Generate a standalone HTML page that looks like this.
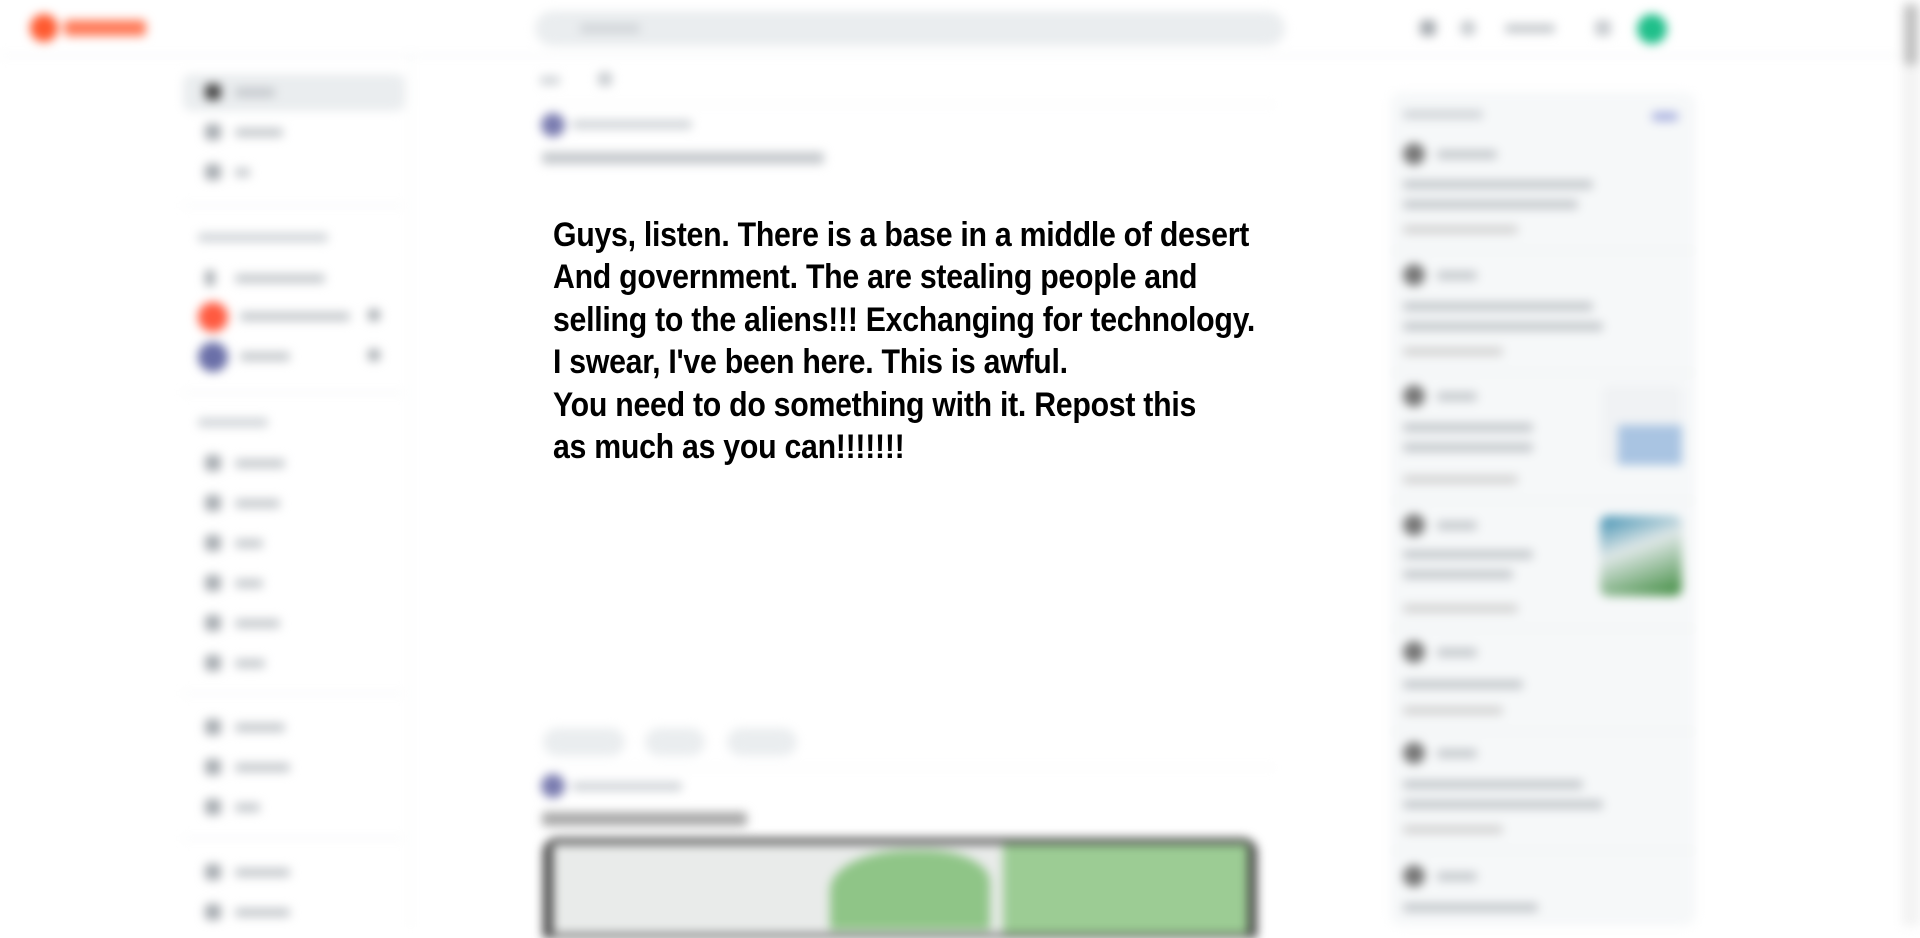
<!DOCTYPE html>
<html><head><meta charset="utf-8"><style>
*{margin:0;padding:0;box-sizing:border-box}
body{width:1920px;height:926px;overflow:hidden;background:#fff;font-family:"Liberation Sans",sans-serif;position:relative}
.bl{position:absolute;inset:0;filter:blur(5px)}
.a{position:absolute}
.g{background:#c4c8cc;height:9px;border-radius:3px;position:absolute}
.ic{position:absolute;width:16px;height:16px;border-radius:4px;background:#a6abb0}
.txt{position:absolute;left:553px;top:214px;font-weight:bold;font-size:34px;line-height:42.4px;color:#000;transform:scaleX(0.89);transform-origin:0 0;white-space:nowrap;letter-spacing:-0.3px}
</style></head><body>
<div class="bl">
 <div class="a" style="left:0;top:55px;width:1900px;height:1px;background:#e5e7e9"></div>
 <div class="a" style="left:30px;top:14px;width:28px;height:28px;border-radius:50%;background:#ff5a30"></div>
 <div class="a" style="left:64px;top:20px;width:82px;height:16px;background:#ff7a58;border-radius:4px"></div>
 <div class="a" style="left:535px;top:11px;width:750px;height:35px;background:#eaedef;border-radius:18px"></div>
 <div class="g" style="left:580px;top:24px;width:60px;background:#d0d4d8"></div>
 <div class="ic" style="left:1420px;top:20px"></div>
 <div class="ic" style="left:1460px;top:20px;border-radius:50%;background:#c8ccd0"></div>
 <div class="g" style="left:1505px;top:24px;width:50px"></div>
 <div class="ic" style="left:1595px;top:20px;background:#c8ccd0"></div>
 <div class="a" style="left:1637px;top:14px;width:30px;height:30px;border-radius:50%;background:#1fbf8a"></div>
 <div class="a" style="left:1902px;top:0;width:18px;height:926px;background:#f3f3f3"></div>
 <div class="a" style="left:1904px;top:5px;width:14px;height:60px;background:#c1c1c1;border-radius:4px"></div>
 <div class="a" style="left:410px;top:56px;width:1px;height:870px;background:#eef0f1"></div>
 <div class="a" style="left:183px;top:74px;width:222px;height:37px;background:#eaedef;border-radius:8px"></div>
 <div class="ic" style="left:205px;top:84px;background:#444"></div><div class="g" style="left:235px;top:88px;width:40px"></div>
 <div class="ic" style="left:205px;top:124px"></div><div class="g" style="left:235px;top:128px;width:48px"></div>
 <div class="ic" style="left:205px;top:164px"></div><div class="g" style="left:235px;top:168px;width:15px"></div>
 <div class="a" style="left:183px;top:205px;width:222px;height:1px;background:#e5e7e9"></div>
 <div class="g" style="left:198px;top:233px;width:130px;background:#d0d4d8"></div>
 <div class="ic" style="left:205px;top:270px;width:10px"></div><div class="g" style="left:235px;top:274px;width:90px"></div>
 <div class="a" style="left:198px;top:302px;width:30px;height:30px;border-radius:50%;background:#ff5a40"></div><div class="g" style="left:240px;top:312px;width:110px"></div><div class="ic" style="left:368px;top:309px;width:12px;height:12px"></div>
 <div class="a" style="left:198px;top:342px;width:30px;height:30px;border-radius:50%;background:#6a6fa8"></div><div class="g" style="left:240px;top:352px;width:50px"></div><div class="ic" style="left:368px;top:349px;width:12px;height:12px"></div>
 <div class="a" style="left:183px;top:392px;width:222px;height:1px;background:#e5e7e9"></div>
 <div class="g" style="left:198px;top:418px;width:70px;background:#d0d4d8"></div>
 <div class="ic" style="left:205px;top:455px"></div><div class="g" style="left:235px;top:459px;width:50px"></div>
 <div class="ic" style="left:205px;top:495px"></div><div class="g" style="left:235px;top:499px;width:45px"></div>
 <div class="ic" style="left:205px;top:535px"></div><div class="g" style="left:235px;top:539px;width:28px"></div>
 <div class="ic" style="left:205px;top:575px"></div><div class="g" style="left:235px;top:579px;width:28px"></div>
 <div class="ic" style="left:205px;top:615px"></div><div class="g" style="left:235px;top:619px;width:45px"></div>
 <div class="ic" style="left:205px;top:655px"></div><div class="g" style="left:235px;top:659px;width:30px"></div>
 <div class="a" style="left:183px;top:693px;width:222px;height:1px;background:#e5e7e9"></div>
 <div class="ic" style="left:205px;top:719px"></div><div class="g" style="left:235px;top:723px;width:50px"></div>
 <div class="ic" style="left:205px;top:759px"></div><div class="g" style="left:235px;top:763px;width:55px"></div>
 <div class="ic" style="left:205px;top:799px"></div><div class="g" style="left:235px;top:803px;width:25px"></div>
 <div class="a" style="left:183px;top:838px;width:222px;height:1px;background:#e5e7e9"></div>
 <div class="ic" style="left:205px;top:864px"></div><div class="g" style="left:235px;top:868px;width:55px"></div>
 <div class="ic" style="left:205px;top:904px"></div><div class="g" style="left:235px;top:908px;width:55px"></div>
 <div class="g" style="left:540px;top:76px;width:20px;background:#d0d4d8"></div><div class="ic" style="left:598px;top:72px;width:14px;height:14px;background:#c8ccd0"></div>
 <div class="a" style="left:540px;top:104px;width:735px;height:1px;background:#eef0f1"></div>
 <div class="a" style="left:541px;top:113px;width:24px;height:24px;border-radius:50%;background:#7a7cb0"></div>
 <div class="g" style="left:572px;top:120px;width:120px;background:#d0d4d8"></div>
 <div class="g" style="left:542px;top:152px;width:282px;height:12px"></div>
 <div class="a" style="left:543px;top:728px;width:82px;height:28px;border-radius:14px;background:#eaedef"></div>
 <div class="a" style="left:645px;top:728px;width:60px;height:28px;border-radius:14px;background:#eaedef"></div>
 <div class="a" style="left:727px;top:728px;width:70px;height:28px;border-radius:14px;background:#eaedef"></div>
 <div class="a" style="left:540px;top:767px;width:735px;height:1px;background:#eef0f1"></div>
 <div class="a" style="left:541px;top:774px;width:24px;height:24px;border-radius:50%;background:#7a7cb0"></div>
 <div class="g" style="left:572px;top:782px;width:110px;background:#d0d4d8"></div>
 <div class="g" style="left:542px;top:812px;width:205px;height:14px;background:#a8a8a8"></div>
 <div class="a" style="left:543px;top:838px;width:714px;height:100px;background:#444;border-radius:14px 14px 0 0"></div>
 <div class="a" style="left:553px;top:844px;width:450px;height:90px;background:#e9ebea"></div>
 <div class="a" style="left:1003px;top:844px;width:245px;height:90px;background:#9ccc94"></div>
 <div class="a" style="left:830px;top:850px;width:160px;height:80px;background:#8fc587;border-radius:50% 40% 0 0"></div>
 <div class="a" style="left:1390px;top:92px;width:306px;height:834px;background:#f6f8f9;border-radius:12px"></div>
 <div class="g" style="left:1403px;top:110px;width:80px;background:#d0d4d8"></div><div class="g" style="left:1652px;top:112px;width:26px;background:#aab2e0"></div>
 <div class="a" style="left:1403px;top:143px;width:22px;height:22px;border-radius:50%;background:#777"></div><div class="g" style="left:1437px;top:150px;width:60px"></div>
 <div class="g" style="left:1403px;top:180px;width:190px"></div><div class="g" style="left:1403px;top:200px;width:175px"></div><div class="g" style="left:1403px;top:225px;width:115px;background:#d4d4d4"></div>
 <div class="a" style="left:1390px;top:250px;width:306px;height:1px;background:#e5e7e9"></div>
 <div class="a" style="left:1403px;top:264px;width:22px;height:22px;border-radius:50%;background:#777"></div><div class="g" style="left:1437px;top:271px;width:40px"></div>
 <div class="g" style="left:1403px;top:302px;width:190px"></div><div class="g" style="left:1403px;top:322px;width:200px"></div><div class="g" style="left:1403px;top:347px;width:100px;background:#d4d4d4"></div>
 <div class="a" style="left:1390px;top:372px;width:306px;height:1px;background:#e5e7e9"></div>
 <div class="a" style="left:1403px;top:385px;width:22px;height:22px;border-radius:50%;background:#777"></div><div class="g" style="left:1437px;top:392px;width:40px"></div>
 <div class="g" style="left:1403px;top:423px;width:130px"></div><div class="g" style="left:1403px;top:443px;width:130px"></div><div class="g" style="left:1403px;top:475px;width:115px;background:#d4d4d4"></div>
 <div class="a" style="left:1602px;top:385px;width:80px;height:80px;border-radius:8px;background:#f0f2f4"></div>
 <div class="a" style="left:1618px;top:425px;width:64px;height:40px;background:#a9c4e2"></div>
 <div class="a" style="left:1390px;top:500px;width:306px;height:1px;background:#e5e7e9"></div>
 <div class="a" style="left:1403px;top:514px;width:22px;height:22px;border-radius:50%;background:#777"></div><div class="g" style="left:1437px;top:521px;width:40px"></div>
 <div class="g" style="left:1403px;top:550px;width:130px"></div><div class="g" style="left:1403px;top:570px;width:110px"></div><div class="g" style="left:1403px;top:604px;width:115px;background:#d4d4d4"></div>
 <div class="a" style="left:1600px;top:516px;width:82px;height:80px;border-radius:8px;background:linear-gradient(160deg,#3b8db0,#e0e8e8 40%,#3c8a3c)"></div>
 <div class="a" style="left:1390px;top:628px;width:306px;height:1px;background:#e5e7e9"></div>
 <div class="a" style="left:1403px;top:641px;width:22px;height:22px;border-radius:50%;background:#777"></div><div class="g" style="left:1437px;top:648px;width:40px"></div>
 <div class="g" style="left:1403px;top:680px;width:120px"></div><div class="g" style="left:1403px;top:706px;width:100px;background:#d4d4d4"></div>
 <div class="a" style="left:1390px;top:731px;width:306px;height:1px;background:#e5e7e9"></div>
 <div class="a" style="left:1403px;top:742px;width:22px;height:22px;border-radius:50%;background:#777"></div><div class="g" style="left:1437px;top:749px;width:40px"></div>
 <div class="g" style="left:1403px;top:780px;width:180px"></div><div class="g" style="left:1403px;top:800px;width:200px"></div><div class="g" style="left:1403px;top:825px;width:100px;background:#d4d4d4"></div>
 <div class="a" style="left:1390px;top:850px;width:306px;height:1px;background:#e5e7e9"></div>
 <div class="a" style="left:1403px;top:865px;width:22px;height:22px;border-radius:50%;background:#777"></div><div class="g" style="left:1437px;top:872px;width:40px"></div>
 <div class="g" style="left:1403px;top:903px;width:135px"></div>
</div>
<div class="txt">Guys, listen. There is a base in a middle of desert<br>And government. The are stealing people and<br>selling to the aliens!!! Exchanging for technology.<br>I swear, I've been here. This is awful.<br>You need to do something with it. Repost this<br>as much as you can!!!!!!!</div>
</body></html>
